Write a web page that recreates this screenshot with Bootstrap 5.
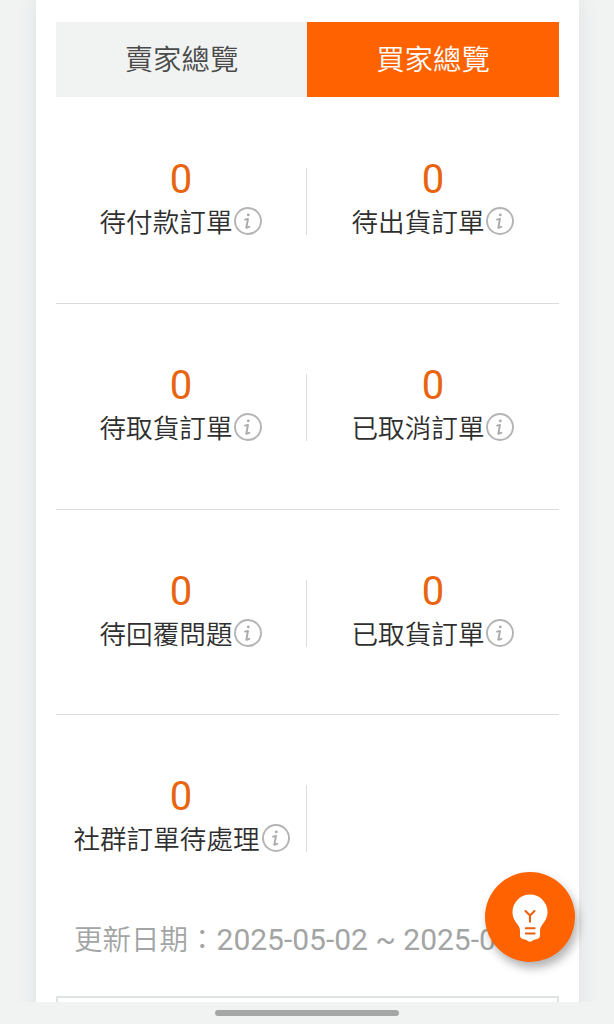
<!DOCTYPE html>
<html lang="zh-Hant">
<head>
<meta charset="utf-8">
<meta name="viewport" content="width=device-width, initial-scale=1">
<title>買家總覽</title>
<link href="https://cdn.jsdelivr.net/npm/bootstrap@5.3.0/dist/css/bootstrap.min.css" rel="stylesheet">
<style>
  body { background: #f1f3f3; color: #2f2f2f; font-family: Roboto, "Noto Sans CJK TC", sans-serif; height: 1024px; overflow: hidden; }
  .viewport { height: 1002px; padding: 0 35.5px 0 36px; }
  .panel { background: #fff; padding: 22px 19.5px 0 20px; box-shadow: 0 0 20px rgba(60,80,80,.1); }
  .tabs { margin-bottom: 1px; }
  .tabs .btn { height: 75px; border: 0; border-radius: 0; font-size: 28.4px; font-weight: 350; line-height: 1; padding: 3px 0 0; background: #f1f3f3; color: #4a4a4a; }
  .tabs .seller { width: 251px; }
  .tabs .btn.active { background: #ff6200; color: #fff; }
  .stat-row { height: 205.75px; border-bottom: 1px solid #d9dcde; }
  .stat-row.last-row { border-bottom-color: transparent; }
  .stat { padding-top: 62px; width: 252px; }
  .stat:first-child { width: 250px; }
  .divider { width: 1px; height: 67px; margin-top: 70px; background: #d9dee0; }
  .count { font-size: 40px; line-height: 40px; color: #e8640f; }
  .caption-line { font-size: 26.6px; line-height: 42px; font-weight: 350; margin-top: 2px; white-space: nowrap; }
  .last-row .caption-line { padding-left: 1px; }
  .info { width: 28px; height: 28px; margin: -4px 0 0 2px; }
  .updated { font-size: 28.5px; line-height: 40px; color: #a3a5a5; font-weight: 350; margin: 0 0 35px 18px; white-space: nowrap; }
  .dates { font-size: 30px; line-height: 1; font-weight: 400; }
  .next-box { height: 60px; border: 2px solid #e0e3e3; }
  .bulb { right: 39px; bottom: 62px; width: 90px; height: 90px; background: #ff6200; box-shadow: 3px 6px 10px rgba(0,0,0,.3); }
  .handle { width: 184px; height: 6px; background: #a5a7a7; }
</style>
</head>
<body>
<svg class="d-none">
  <symbol id="info" viewBox="0 0 28 28">
    <circle cx="14" cy="14" r="13" fill="none" stroke="#b4b4b4" stroke-width="1.9"/>
    <circle cx="14.3" cy="7.9" r="1.4" fill="#aaa"/>
    <path d="M11 12.600l3-.7-1.700 8.900 3-1" fill="none" stroke="#aaa" stroke-width="1.900" stroke-linecap="round" stroke-linejoin="round"/>
  </symbol>
</svg>
<main class="viewport overflow-hidden">
  <section class="panel">
    <div class="tabs d-flex">
      <button class="btn seller">賣家總覽</button>
      <button class="btn flex-fill active">買家總覽</button>
    </div>
    <div class="stat-row d-flex">
      <div class="stat text-center"><div class="count">0</div><div class="caption-line d-flex justify-content-center align-items-center">待付款訂單<svg class="info"><use href="#info"/></svg></div></div>
      <div class="divider"></div>
      <div class="stat text-center"><div class="count">0</div><div class="caption-line d-flex justify-content-center align-items-center">待出貨訂單<svg class="info"><use href="#info"/></svg></div></div>
    </div>
    <div class="stat-row d-flex">
      <div class="stat text-center"><div class="count">0</div><div class="caption-line d-flex justify-content-center align-items-center">待取貨訂單<svg class="info"><use href="#info"/></svg></div></div>
      <div class="divider"></div>
      <div class="stat text-center"><div class="count">0</div><div class="caption-line d-flex justify-content-center align-items-center">已取消訂單<svg class="info"><use href="#info"/></svg></div></div>
    </div>
    <div class="stat-row d-flex">
      <div class="stat text-center"><div class="count">0</div><div class="caption-line d-flex justify-content-center align-items-center">待回覆問題<svg class="info"><use href="#info"/></svg></div></div>
      <div class="divider"></div>
      <div class="stat text-center"><div class="count">0</div><div class="caption-line d-flex justify-content-center align-items-center">已取貨訂單<svg class="info"><use href="#info"/></svg></div></div>
    </div>
    <div class="stat-row last-row d-flex">
      <div class="stat text-center"><div class="count">0</div><div class="caption-line d-flex justify-content-center align-items-center">社群訂單待處理<svg class="info"><use href="#info"/></svg></div></div>
      <div class="divider"></div>
      <div class="stat"></div>
    </div>
    <p class="updated">更新日期：<span class="dates">2025-05-02 ~ 2025-05-02</span></p>
    <div class="next-box"></div>
  </section>
</main>
<button class="bulb btn border-0 rounded-circle position-fixed p-0 d-flex align-items-center justify-content-center" aria-label="提示">
  <svg width="90" height="90" viewBox="0 0 90 90">
    <path d="M45 22.500a17.500 17.500 0 0 0-17.500 17.500c0 6 2.800 9.500 5.300 12.700 1.700 2.300 2.200 4 2.200 6.300v4.500q0 3 3 3.400l3.500 1.200q1.700 1.700 3.500 1.700t3.500-1.700l3.500-1.200q3-.4 3-3.400v-4.500c0-2.300.5-4 2.200-6.300 2.500-3.200 5.300-6.700 5.300-12.700a17.500 17.500 0 0 0-17.500-17.500z" fill="#fff"/>
    <path d="M40.500 39l4.500 4.500 4.500-4.500M45 43.500v6.300M40.800 56.200h8.800M40.800 61.500h8.800" fill="none" stroke="#e9600f" stroke-width="2.100" stroke-linecap="round"/>
  </svg>
</button>
<footer class="d-flex justify-content-center pt-2"><div class="handle rounded-pill"></div></footer>
<script src="https://cdn.jsdelivr.net/npm/bootstrap@5.3.0/dist/js/bootstrap.bundle.min.js"></script>
</body>
</html>
